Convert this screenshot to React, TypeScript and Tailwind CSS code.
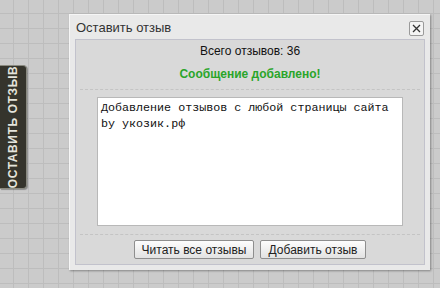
import React from "react";

export default function App() {
  return (
    <div
      className="relative w-[440px] h-[288px] overflow-hidden bg-[#cbcbcb] [background-image:linear-gradient(#bdbdbd_1px,transparent_1px),linear-gradient(90deg,#bdbdbd_1px,transparent_1px)] [background-size:15px_15px] [background-position:13px_13px]"
      style={{ fontFamily: '"Liberation Sans", Arial, sans-serif' }}
    >
      {/* side tab */}
      <div className="absolute left-0 top-[65px] w-[27px] h-[124px] bg-[#35342c] border border-l-0 border-[#8a8a80] rounded-r-[4px] flex items-center justify-center shadow-[1px_1px_1px_rgba(0,0,0,0.3)]">
        <span className="-rotate-90 whitespace-nowrap text-[12px] font-bold text-[#e4e4dc] tracking-[0.6px] uppercase">
          оставить отзыв
        </span>
      </div>

      {/* dialog */}
      <div className="absolute left-[69px] top-[14px] w-[361px] h-[256px] bg-[#e9e9e9] border-t border-l border-[#f6f6f6] shadow-[1px_1px_2px_rgba(0,0,0,0.35)] flex flex-col px-[5px] pb-[5px]">
        <div className="h-[24px] flex items-center justify-between">
          <span className="text-[13px] text-[#333] pl-[1px] pt-[1px]">Оставить отзыв</span>
          <div className="w-[15px] h-[15px] mr-[1px] mt-[2px] bg-[#f4f4f4] border border-[#9a9a9a] rounded-[2px] flex items-center justify-center">
            <svg width="9" height="9" viewBox="0 0 9 9">
              <path d="M1 1 L8 8 M8 1 L1 8" stroke="#333" strokeWidth="1.3" />
            </svg>
          </div>
        </div>
        <div className="flex-1 bg-[#d9d9d9] border border-[#c2c2cc] flex flex-col items-center px-[4px]">
          <div className="text-[12px] text-[#111] mt-[2px] h-[15px]">Всего отзывов: 36</div>
          <div className="text-[12px] font-bold text-[#2aa52a] mt-[8px] h-[15px]">Сообщение добавлено!</div>
          <div className="w-full border-t border-dashed border-[#c4c4c4] mt-[9px]" />
          <div
            className="mt-[7px] w-[306px] h-[129px] bg-white border border-[#b8b8b8] px-[3px] pt-[2px] text-[11.7px] leading-[16px] text-[#111]"
            style={{ fontFamily: '"Liberation Mono", "Courier New", monospace' }}
          >
            Добавление отзывов с любой страницы сайта
            <br />
            by укозик.рф
          </div>
          <div className="w-full border-t border-dashed border-[#c4c4c4] mt-[8px]" />
          <div className="flex gap-[6px] mt-[5px]">
            <button className="w-[120px] h-[19px] text-[12px] text-[#222] border border-[#8e8e8e] rounded-[2px] bg-[linear-gradient(#fdfdfd,#e2e2e2)] flex items-center justify-center">
              Читать все отзывы
            </button>
            <button className="w-[106px] h-[19px] text-[12px] text-[#222] border border-[#8e8e8e] rounded-[2px] bg-[linear-gradient(#fdfdfd,#e2e2e2)] flex items-center justify-center">
              Добавить отзыв
            </button>
          </div>
        </div>
      </div>
    </div>
  );
}
